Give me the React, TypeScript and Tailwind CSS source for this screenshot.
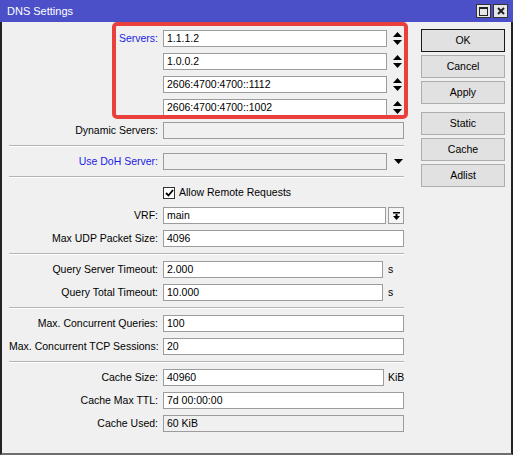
import type { ReactNode } from 'react';

function UpDown() {
  return (
    <svg width="9" height="13" viewBox="0 0 9 13" className="ml-[6px] shrink-0">
      <polygon points="4.5,0 9,5 0,5" fill="#000" />
      <polygon points="0,8 9,8 4.5,13" fill="#000" />
    </svg>
  );
}

function Field({ value = '', width, disabled = false }: { value?: string; width: string; disabled?: boolean }) {
  return (
    <div
      className={`${width} h-[17px] border border-[#9c9c9c] pl-[3px] leading-[15px] whitespace-nowrap overflow-hidden ${
        disabled ? 'bg-[#f0f0f0]' : 'bg-white'
      }`}
    >
      {value}
    </div>
  );
}

function Row({ label, blue = false, children }: { label?: string; blue?: boolean; children: ReactNode }) {
  return (
    <div className="flex h-[17px] items-center">
      <div className={`w-[149px] shrink-0 text-right whitespace-nowrap ${blue ? 'text-[#1c1ce6]' : 'text-black'}`}>
        {label}
      </div>
      <div className="ml-[5px] flex items-center">{children}</div>
    </div>
  );
}

function Separator() {
  return <div className="h-[2px] border-t border-b border-t-[#b4b4b4] border-b-white" />;
}

function Btn({ label, primary = false }: { label: string; primary?: boolean }) {
  return (
    <div
      className={`flex h-[23px] w-[84px] items-center justify-center bg-[#e1e1e1] border ${
        primary ? 'border-[#1a1a1a]' : 'border-[#adadad]'
      }`}
    >
      {label}
    </div>
  );
}

export default function App() {
  const servers = ['1.1.1.2', '1.0.0.2', '2606:4700:4700::1112', '2606:4700:4700::1002'];

  return (
    <div className="relative flex h-[455px] w-[513px] flex-col overflow-hidden bg-[#f0f0f0] font-['Liberation_Sans',Arial,sans-serif] text-[10.5px] text-black">
      <header className="flex h-[22px] shrink-0 items-center bg-[#4b50c9] pl-[7px] pr-[5px] text-white">
        <span className="text-[11px]">DNS Settings</span>
        <div className="ml-auto flex items-center gap-[2px]">
          <div className="flex h-[14px] w-[15px] items-center justify-center border border-[#333] bg-[#e6e6e6]">
            <svg width="9" height="9" viewBox="0 0 9 9">
              <rect x="0.5" y="0.5" width="8" height="8" fill="none" stroke="#222" />
              <rect x="0" y="0" width="9" height="2" fill="#222" />
            </svg>
          </div>
          <div className="flex h-[14px] w-[15px] items-center justify-center border border-[#333] bg-[#e6e6e6]">
            <svg width="8" height="8" viewBox="0 0 8 8">
              <path d="M1 1 L7 7 M7 1 L1 7" stroke="#222" strokeWidth="2" />
            </svg>
          </div>
        </div>
      </header>

      <div className="flex flex-1 border-b-2 border-l-2 border-r-2 border-b-[#6e6e6e] border-l-[#222] border-r-[#222]">
        <div className="ml-[7px] flex w-[395px] flex-col gap-[6px] pt-[8px]">
          {servers.map((s, i) => (
            <Row key={s} label={i === 0 ? 'Servers:' : ''} blue>
              <Field value={s} width="w-[224px]" />
              <UpDown />
            </Row>
          ))}
          <Row label="Dynamic Servers:">
            <Field width="w-[241px]" disabled />
          </Row>
          <Separator />
          <Row label="Use DoH Server:" blue>
            <Field width="w-[224px]" disabled />
            <svg width="9" height="5" viewBox="0 0 9 5" className="ml-[7px]">
              <polygon points="0,0 9,0 4.5,5" fill="#000" />
            </svg>
          </Row>
          <Separator />
          <Row>
            <div className="flex h-[12px] w-[12px] items-center justify-center border border-[#333] bg-white">
              <svg width="9" height="8" viewBox="0 0 9 8">
                <path d="M1 4 L3.5 6.5 L8 1" fill="none" stroke="#000" strokeWidth="1.8" />
              </svg>
            </div>
            <span className="ml-[4px] whitespace-nowrap">Allow Remote Requests</span>
          </Row>
          <Row label="VRF:">
            <Field value="main" width="w-[223px]" />
            <div className="ml-[2px] flex h-[17px] w-[16px] items-center justify-center border border-[#9c9c9c] bg-[#f5f5f5]">
              <svg width="7" height="8" viewBox="0 0 7 8">
                <rect x="0" y="0" width="7" height="1.5" fill="#000" />
                <rect x="2.5" y="2" width="2" height="2.5" fill="#000" />
                <polygon points="0,4 7,4 3.5,8" fill="#000" />
              </svg>
            </div>
          </Row>
          <Row label="Max UDP Packet Size:">
            <Field value="4096" width="w-[241px]" />
          </Row>
          <Separator />
          <Row label="Query Server Timeout:">
            <Field value="2.000" width="w-[220px]" />
            <span className="ml-[5px]">s</span>
          </Row>
          <Row label="Query Total Timeout:">
            <Field value="10.000" width="w-[220px]" />
            <span className="ml-[5px]">s</span>
          </Row>
          <Separator />
          <Row label="Max. Concurrent Queries:">
            <Field value="100" width="w-[241px]" />
          </Row>
          <Row label="Max. Concurrent TCP Sessions:">
            <Field value="20" width="w-[241px]" />
          </Row>
          <Separator />
          <Row label="Cache Size:">
            <Field value="40960" width="w-[221px]" />
            <span className="ml-[4px]">KiB</span>
          </Row>
          <Row label="Cache Max TTL:">
            <Field value="7d 00:00:00" width="w-[241px]" />
          </Row>
          <Row label="Cache Used:">
            <Field value="60 KiB" width="w-[241px]" disabled />
          </Row>
        </div>

        <div className="ml-[17px] flex flex-col pt-[7px]">
          <div className="flex flex-col gap-[3px]">
            <Btn label="OK" primary />
            <Btn label="Cancel" />
            <Btn label="Apply" />
          </div>
          <div className="mt-[8px] flex flex-col gap-[3px]">
            <Btn label="Static" />
            <Btn label="Cache" />
            <Btn label="Adlist" />
          </div>
        </div>
      </div>

      <div className="pointer-events-none absolute left-[112px] top-[22px] h-[97px] w-[296px] rounded-[5px] border-4 border-[#e9403e]" />
    </div>
  );
}
